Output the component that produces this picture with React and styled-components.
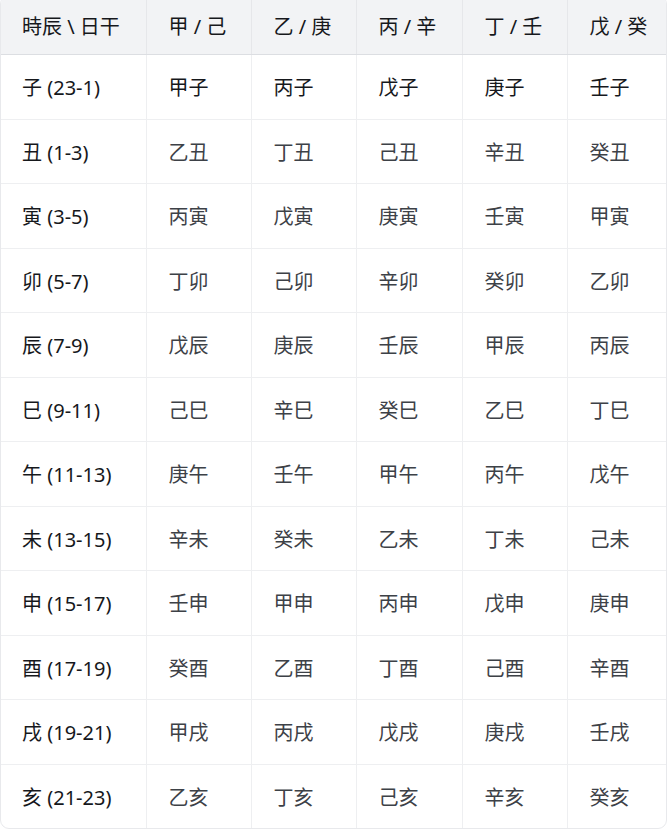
import React from 'react';
import styled, { createGlobalStyle } from 'styled-components';

const GlobalStyle = createGlobalStyle`
  html, body {
    margin: 0;
    padding: 0;
    background: #ffffff;
  }
  body {
    font-family: "Noto Sans", "Noto Sans CJK SC", sans-serif;
    overflow: hidden;
  }
`;

const Frame = styled.div`
  width: 667px;
  margin-top: -5px;
  border: 1px solid #e8e9ec;
  border-radius: 9px;
  overflow: hidden;
  box-sizing: border-box;
`;

const Table = styled.table`
  width: 100%;
  border-collapse: collapse;
  table-layout: fixed;
  font-size: 20px;
`;

const HeadCell = styled.th`
  height: 58px;
  padding: 0 0 0 22px;
  text-align: left;
  font-weight: 400;
  color: #16181c;
  background: #f2f3f5;
  border-bottom: 1px solid #dcdee2;
  border-left: 1px solid #e6e7ea;
  white-space: nowrap;
  &:first-child {
    border-left: none;
    padding-left: 21px;
  }
`;

const Row = styled.tr`
  & + & td {
    border-top: 1px solid #eeeff1;
  }
`;

const Cell = styled.td`
  height: 63.5px;
  padding: 0 0 0 22px;
  text-align: left;
  white-space: nowrap;
  border-left: 1px solid #eeeff1;
  color: ${(p) => (p.$label || p.$strong ? '#16181c' : '#3d4147')};
  &:first-child {
    border-left: none;
    padding-left: 21px;
  }
`;

const stems = ['甲 / 己', '乙 / 庚', '丙 / 辛', '丁 / 壬', '戊 / 癸'];

const rows = [
  ['子 (23-1)', '甲子', '丙子', '戊子', '庚子', '壬子'],
  ['丑 (1-3)', '乙丑', '丁丑', '己丑', '辛丑', '癸丑'],
  ['寅 (3-5)', '丙寅', '戊寅', '庚寅', '壬寅', '甲寅'],
  ['卯 (5-7)', '丁卯', '己卯', '辛卯', '癸卯', '乙卯'],
  ['辰 (7-9)', '戊辰', '庚辰', '壬辰', '甲辰', '丙辰'],
  ['巳 (9-11)', '己巳', '辛巳', '癸巳', '乙巳', '丁巳'],
  ['午 (11-13)', '庚午', '壬午', '甲午', '丙午', '戊午'],
  ['未 (13-15)', '辛未', '癸未', '乙未', '丁未', '己未'],
  ['申 (15-17)', '壬申', '甲申', '丙申', '戊申', '庚申'],
  ['酉 (17-19)', '癸酉', '乙酉', '丁酉', '己酉', '辛酉'],
  ['戌 (19-21)', '甲戌', '丙戌', '戊戌', '庚戌', '壬戌'],
  ['亥 (21-23)', '乙亥', '丁亥', '己亥', '辛亥', '癸亥'],
];

const widths = [145, 105, 105, 106, 105, 99];

const App = () => {
  return (
    <>
      <GlobalStyle />
      <Frame>
        <Table>
          <colgroup>
            {widths.map((w, i) => (
              <col key={i} style={{ width: w }} />
            ))}
          </colgroup>
          <thead>
            <tr>
              <HeadCell>時辰 \ 日干</HeadCell>
              {stems.map((s) => (
                <HeadCell key={s}>{s}</HeadCell>
              ))}
            </tr>
          </thead>
          <tbody>
            {rows.map((r, i) => (
              <Row key={r[0]}>
                {r.map((c, j) => (
                  <Cell key={j} $label={j === 0} $strong={i === 0 && j > 0}>
                    {c}
                  </Cell>
                ))}
              </Row>
            ))}
          </tbody>
        </Table>
      </Frame>
    </>
  );
};

export default App;
